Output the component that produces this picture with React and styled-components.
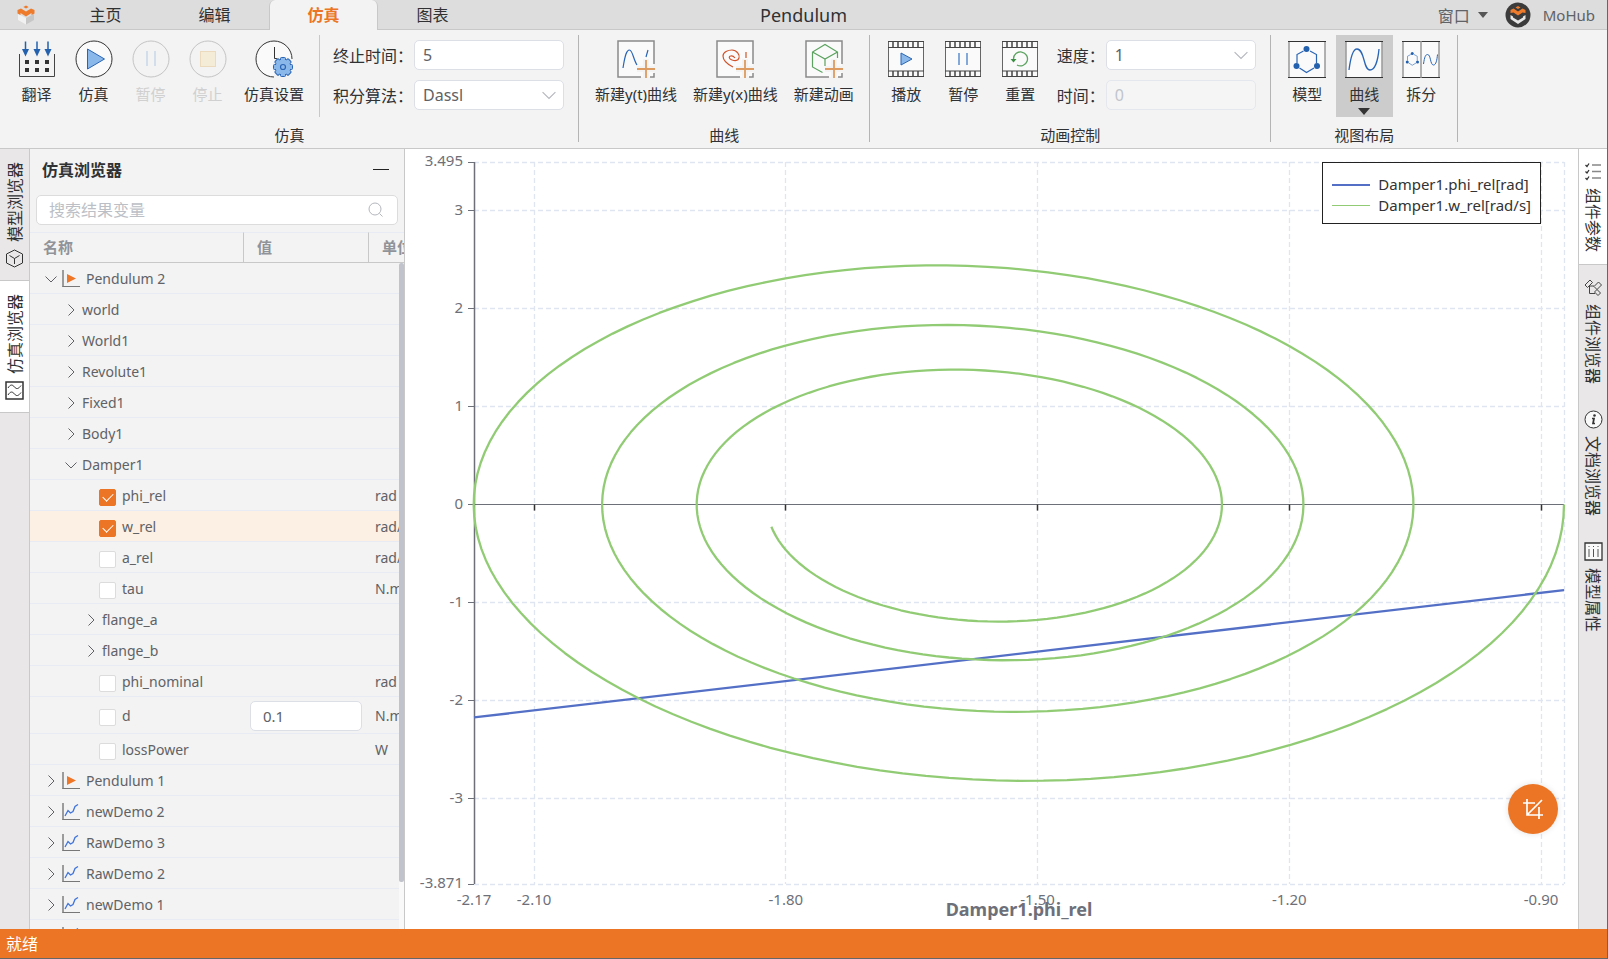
import React, { useState, useRef, useLayoutEffect } from 'react';
import styled, { createGlobalStyle, css } from 'styled-components';

const GlobalStyle = createGlobalStyle`
  * {
    box-sizing: border-box;
  }
  body {
    margin: 0;
    font-family: "Noto Sans", "Noto Sans CJK SC", sans-serif;
    font-size: 15px;
    color: #303133;
  }
  button, input, select {
    font-family: inherit;
    font-size: inherit;
    color: inherit;
  }
  button {
    padding: 0;
    border: none;
    background: none;
    cursor: pointer;
  }
`;

/* ---------- icons ---------- */

const Chevron = ({ down, size = 12, color = '#606266' }) => (
  <svg width={size} height={size} viewBox="0 0 12 12" fill="none" stroke={color}>
    <path d={down ? 'M0.5 3.5L6 9L11.5 3.5' : 'M3.5 0.5L9 6L3.5 11.5'} />
  </svg>
);

const Logo = () => (
  <svg width="20" height="20" viewBox="0 0 20 20">
    <path d="M2 9L10 13V19.500L2 15Z" fill="#f1f1f1" />
    <path d="M18 9L10 13V19.500L18 15Z" fill="#c6c6c6" />
    <path d="M1.500 5L5 3.500L10 6.500L15 3.500L18.500 5V8.500L15.500 10V8L10 11.500L4.500 8V10L1.500 8.500Z" fill="#ee7b2c" />
    <path d="M10 0.500L12.600 2L10 3.600L7.400 2Z" fill="#ee7b2c" />
  </svg>
);

const AvatarLogo = () => (
  <svg width="26" height="26" viewBox="0 0 26 26">
    <circle cx="13" cy="13" r="12.5" fill="#3b3b3b" />
    <path d="M13 4L15.500 5.500L13 7L10.500 5.500Z" fill="#ee7b2c" />
    <path d="M5.500 8L8.500 6.500L13 9.500L17.500 6.500L20.500 8V11L17.500 10.500L13 13.500L8.500 10.500L5.500 11Z" fill="#ee7b2c" />
    <path d="M5.500 13L8 14.500V15.500L13 18.500L18 15.500V14.500L20.500 13V17L13 22L5.500 17Z" fill="#e6e6e6" />
  </svg>
);

const Svg38 = ({ children }) => (
  <svg width="38" height="38" viewBox="0 0 38 38" fill="none">
    {children}
  </svg>
);

const TranslateIcon = () => (
  <Svg38>
    <path d="M1.500 14V36.500H36.500V14" stroke="#444" />
    {[7.5, 19, 30].map(x => (
      <g key={x}>
        <path d={`M${x} 1.500V10`} stroke="#2360ae" strokeWidth="1.500" />
        <path d={`M${x - 3.5} 9H${x + 3.5}L${x} 16.500Z`} fill="#2360ae" />
      </g>
    ))}
    {[9, 19, 29].map(x =>
      [22, 30].map(y => (
        <rect key={`${x}-${y}`} x={x - 2} y={y - 2} width="4" height="4" fill="#333" />
      )),
    )}
  </Svg38>
);

const SimulateIcon = () => (
  <Svg38>
    <circle cx="19" cy="19" r="18" fill="#fafafa" stroke="#333" />
    <path d="M12.500 9V29L29.500 19Z" fill="#8bb8ea" stroke="#2a65b5" />
  </Svg38>
);

const PauseIcon = () => (
  <Svg38>
    <circle cx="19" cy="19" r="18" stroke="#c4c4c4" />
    <path d="M15 11V26M23 11V26" stroke="#b3c9e6" />
  </Svg38>
);

const StopIcon = () => (
  <Svg38>
    <circle cx="19" cy="19" r="18" stroke="#c4c4c4" />
    <rect x="11.500" y="11.500" width="15" height="15" fill="#f5ecd7" stroke="#ecdabf" />
  </Svg38>
);

const SettingIcon = () => (
  <Svg38>
    <path d="M37 19A18 18 0 1 0 19 37V19H37" fill="#fafafa" />
    <path d="M37 19A18 18 0 1 0 19 37" stroke="#333" />
    <path d="M19.500 7V18.500H29" stroke="#333" />
    <circle cx="28" cy="27" r="10.500" fill="#f3f3f3" />
    {[0, 45, 90, 135].map(a => (
      <rect key={a} x="25.500" y="17.500" width="5" height="19" rx="1" fill="#8bb8ea" stroke="#2a65b5" transform={`rotate(${a} 28 27)`} />
    ))}
    <circle cx="28" cy="27" r="7.500" fill="#8bb8ea" />
    <circle cx="28" cy="27" r="2.500" stroke="#2a65b5" strokeWidth="1.200" />
  </Svg38>
);

const NewFrame = ({ children }) => (
  <Svg38>
    <path d="M1 1H37V37H1Z" fill="#fafafa" />
    <path d="M37 24V1H1V37H24M33 37H37V33" stroke="#8a8a8a" strokeWidth="1.500" />
    {children}
    <path d="M29 19V38M20 29H38" stroke="#f3f3f3" strokeWidth="6" />
    <path d="M29 20V38M20 29H38" stroke="#dd9b61" strokeWidth="1.800" />
  </Svg38>
);

const NewYtIcon = () => (
  <NewFrame>
    <path d="M6 28C8 15 9.500 10 12.500 10C15.500 10 16.500 20 20 25M29 17L31 10" stroke="#2a65b5" strokeWidth="1.200" />
  </NewFrame>
);

const NewYxIcon = () => (
  <NewFrame>
    <path d="M17 27C11 24 7 20 7 16C7 12 12 10 16 10C21 10 24 15 23 18C22 21 19 21 16 20C13 19 12.500 16.500 14.500 16C16 15.500 17.500 16 19 18M30 12V18" stroke="#d0532a" strokeWidth="1.200" />
  </NewFrame>
);

const NewAnimIcon = () => (
  <NewFrame>
    <path d="M32.500 18V12L20 4.500L7.500 12V27L17.500 32.500M7.500 12L20 19L32.500 12M20 19V26" stroke="#5ba35f" strokeWidth="1.200" />
  </NewFrame>
);

const FilmFrame = ({ children }) => (
  <Svg38>
    <path d="M1.500 1.500H36.500V36.500H1.500Z" fill="#fafafa" stroke="#666" />
    <path d="M1 1.500H37M1 7.500H37M1 31H37M1 36.500H37" stroke="#444" />
    <path d="M6 2V7M11 2V7M16 2V7M21 2V7M26 2V7M31 2V7M6 31V36M11 31V36M16 31V36M21 31V36M26 31V36M31 31V36" stroke="#444" strokeWidth="1.500" />
    {children}
  </Svg38>
);

const PlayFilmIcon = () => (
  <FilmFrame>
    <path d="M14 13V25L25 19Z" fill="#8bb8ea" stroke="#2a65b5" />
  </FilmFrame>
);

const PauseFilmIcon = () => (
  <FilmFrame>
    <path d="M15 13V25M23 13V25" stroke="#5b8fd0" strokeWidth="1.500" />
  </FilmFrame>
);

const ResetFilmIcon = () => (
  <FilmFrame>
    <path d="M12.500 19A7 7 0 1 1 16 25" stroke="#5ba35f" strokeWidth="1.300" />
    <path d="M9.500 19H15.500L12.500 22.500Z" fill="#3e8f45" />
  </FilmFrame>
);

const ViewFrame = ({ children }) => (
  <Svg38>
    <path d="M1 1H37V37H1Z" fill="#fafafa" />
    <path d="M1 1V38M37 1V38" stroke="#999" strokeWidth="1.500" />
    <path d="M0 1.500H38M0 37.500H38" stroke="#333" />
    {children}
  </Svg38>
);

const ModelShape = () => (
  <>
    <path d="M15.500 11L9 14.500V23M22 11L28.500 14.500V23M11.500 28L18.500 32.500L26 28" stroke="#2a65b5" strokeWidth="1.200" />
    <circle cx="18.500" cy="9" r="3" fill="#2360ae" />
    <circle cx="8.500" cy="26" r="3" fill="#2360ae" />
    <circle cx="29" cy="26" r="3" fill="#2360ae" />
  </>
);

const ModelIcon = () => (
  <ViewFrame>
    <ModelShape />
  </ViewFrame>
);

const CurveIcon = () => (
  <ViewFrame>
    <path d="M4 30C6 14 9 9 12 9C20 9 18 30 25 30C30 30 33 20 34 9" stroke="#2a65b5" strokeWidth="1.300" />
  </ViewFrame>
);

const SplitIcon = () => (
  <ViewFrame>
    <path d="M19 1V38" stroke="#999" strokeWidth="1.500" />
    <g transform="translate(1 9) scale(0.5)" strokeWidth="2">
      <ModelShape />
    </g>
    <path d="M21.500 24C22.500 17 23.500 14.500 25.500 14.500C29 14.500 28 25 31.500 25C34 25 35 20 35.500 14.500" stroke="#2a65b5" />
  </ViewFrame>
);

const CubeIcon = () => (
  <svg width="19" height="19" viewBox="0 0 19 19" fill="none" stroke="#333">
    <path d="M9.500 1L17.500 5V14L9.500 18L1.500 14V5Z" />
    <path d="M9.500 15V9.500L4.500 6.500M9.500 9.500L14.500 6.500" />
  </svg>
);

const WaveIcon = () => (
  <svg width="19" height="19" viewBox="0 0 19 19" fill="none" stroke="#333">
    <path d="M1 1H18V18H1Z" strokeWidth="1.500" />
    <path d="M3 7C5.500 3 7.500 3.500 9.500 6C11.500 8.500 13.500 8 16 4.500M3 14C5.500 10 7.500 10.500 9.500 13C11.500 15.500 13.500 15 16 11.500" />
  </svg>
);

const ChecklistIcon = () => (
  <svg width="19" height="19" viewBox="0 0 19 19" fill="none">
    <path d="M8 3H17M8 9.500H17M8 16H17" stroke="#888" strokeWidth="1.500" />
    <path d="M1.500 3L3 4.500L5 1.500M1.500 9.500L3 11L5 8M1.500 16L3 17.500L5 14.500" stroke="#333" strokeWidth="1.300" />
  </svg>
);

const ComponentsIcon = () => (
  <svg width="19" height="19" viewBox="0 0 19 19" fill="none" stroke="#444">
    <path d="M1 7L6 2L8.500 4.500L3.500 9.500Z" />
    <path d="M10 8.500L14.500 4L17.500 7L13 11.500Z" />
    <path d="M10.500 14L13 11.500L16.500 15L14 17.500Z" />
    <path d="M5.500 8V15.500H11M6 8H10" />
  </svg>
);

const InfoIcon = () => (
  <svg width="19" height="19" viewBox="0 0 19 19" fill="none" stroke="#333">
    <circle cx="9.500" cy="9.500" r="8.500" fill="#fafafa" />
    <circle cx="10.500" cy="5.500" r="1.300" fill="#333" stroke="none" />
    <path d="M8 8.500H10L9 13.500H11" strokeWidth="1.700" />
  </svg>
);

const PropsIcon = () => (
  <svg width="19" height="19" viewBox="0 0 19 19" fill="none" stroke="#333">
    <path d="M1 1H18V18H1Z" fill="#fafafa" strokeWidth="1.300" />
    <path d="M5 4V5M5 7V15M9.500 4V5M9.500 7V15M14 4V5M14 7V15" stroke="#555" />
  </svg>
);

const ResultIcon = ({ kind }) => (
  <svg width="18" height="18" viewBox="0 0 18 18" fill="none">
    <path d="M1 0V17" stroke="#444" />
    <path d="M0.500 16.500H18" stroke="#777" />
    {kind === 'play' ? (
      <path d="M5 4L14 8.500L5 13Z" fill="#ee7727" />
    ) : (
      <path d="M3 13L6 7.500L8.500 10L11 8.500L13 3.500L16 1.500" stroke="#3f73dc" strokeWidth="1.300" />
    )}
  </svg>
);

const SearchIcon = () => (
  <svg width="16" height="16" viewBox="0 0 16 16" fill="none" stroke="#b4b7bd">
    <circle cx="7" cy="7" r="6" />
    <path d="M11.500 11.500L14.500 14.500" />
  </svg>
);

const CropIcon = () => (
  <svg width="22" height="22" viewBox="0 0 22 22" fill="none" stroke="#fff" strokeWidth="1.700">
    <path d="M5 1V17H21M1 5H13M17 9V21M5 17L20 2" />
  </svg>
);

/* ---------- chart ---------- */

const X_MIN = -2.1716;
const X_MAX = -0.8727;
const Y_MIN = -3.871;
const Y_MAX = 3.495;

// damped pendulum, integrated with RK4 over 5 seconds
const simulate = () => {
  const k = 19.54;
  const c = 0.4;
  const h = 0.01;
  const acc = (p, w) => -k * Math.cos(p) - c * w;
  const points = [];
  let p = X_MAX;
  let w = 0;
  for (let i = 0; i <= 500; i += 1) {
    points.push([p, w]);
    const a1 = acc(p, w);
    const w2 = w + (h / 2) * a1;
    const a2 = acc(p + (h / 2) * w, w2);
    const w3 = w + (h / 2) * a2;
    const a3 = acc(p + (h / 2) * w2, w3);
    const w4 = w + h * a3;
    const a4 = acc(p + h * w3, w4);
    p += (h / 6) * (w + 2 * w2 + 2 * w3 + w4);
    w += (h / 6) * (a1 + 2 * a2 + 2 * a3 + a4);
  }
  return points;
};

const trajectory = simulate();
const xTicks = [-2.1, -1.8, -1.5, -1.2, -0.9];
const yTicks = [3, 2, 1, 0, -1, -2, -3];

const Chart = () => {
  const ref = useRef(null);
  const [size, setSize] = useState({ width: 0, height: 0 });

  useLayoutEffect(() => {
    const update = () => {
      const { width, height } = ref.current.getBoundingClientRect();
      setSize({ width, height });
    };
    update();
    const observer = new ResizeObserver(update);
    observer.observe(ref.current);
    return () => observer.disconnect();
  }, []);

  const left = 69;
  const top = 13;
  const right = Math.max(size.width - 14, left);
  const bottom = Math.max(size.height - 45, top);
  const sx = v => left + ((v - X_MIN) / (X_MAX - X_MIN)) * (right - left);
  const sy = v => top + ((Y_MAX - v) / (Y_MAX - Y_MIN)) * (bottom - top);
  const crisp = v => Math.floor(v) + 0.5;
  const toPath = pts => pts.map(([x, y]) => `${sx(x).toFixed(2)},${sy(y).toFixed(2)}`).join(' ');

  return (
    <ChartArea ref={ref}>
      <ChartSvg width={size.width} height={size.height}>
        <g stroke="#e0e6f1" strokeWidth="1.300" strokeDasharray="5 3">
          {[Y_MAX, 3, 2, 1, -1, -2, -3, Y_MIN].map(v => (
            <line key={v} x1={left} x2={right} y1={crisp(sy(v))} y2={crisp(sy(v))} />
          ))}
          {[...xTicks, X_MAX].map(v => (
            <line key={v} x1={crisp(sx(v))} x2={crisp(sx(v))} y1={top} y2={bottom} />
          ))}
        </g>
        <g stroke="#6e7079">
          <line x1={crisp(left)} x2={crisp(left)} y1={top} y2={bottom} strokeWidth="1.500" />
          <line x1={left} x2={right} y1={crisp(sy(0))} y2={crisp(sy(0))} />
          {[Y_MAX, ...yTicks, Y_MIN].map(v => (
            <line key={v} x1={left - 6} x2={left} y1={crisp(sy(v))} y2={crisp(sy(v))} />
          ))}
          {xTicks.map(v => (
            <line key={v} x1={crisp(sx(v))} x2={crisp(sx(v))} y1={sy(0)} y2={sy(0) + 6} stroke="#333" strokeWidth="1.500" />
          ))}
        </g>
        <polyline points={toPath([[X_MIN, X_MIN], [X_MAX, X_MAX]])} stroke="#5470c6" />
        <polyline points={toPath(trajectory)} stroke="#91cc75" />
        <g textAnchor="end">
          <text x={left - 11} y={sy(Y_MAX) + 4}>3.495</text>
          {yTicks.map(v => (
            <text key={v} x={left - 11} y={sy(v) + 4}>{v}</text>
          ))}
          <text x={left - 11} y={sy(Y_MIN) + 4}>-3.871</text>
        </g>
        <g textAnchor="middle">
          <text x={left} y={bottom + 21}>-2.17</text>
          {xTicks.map(v => (
            <text key={v} x={sx(v)} y={bottom + 21}>{v.toFixed(2)}</text>
          ))}
          <AxisName x={(left + right) / 2} y={bottom + 32}>Damper1.phi_rel</AxisName>
        </g>
      </ChartSvg>
      <Legend>
        <LegendItem>
          <LegendLine $color="#5470c6" $thick />
          Damper1.phi_rel[rad]
        </LegendItem>
        <LegendItem>
          <LegendLine $color="#91cc75" />
          Damper1.w_rel[rad/s]
        </LegendItem>
      </Legend>
      <CropButton aria-label="crop">
        <CropIcon />
      </CropButton>
    </ChartArea>
  );
};

/* ---------- data ---------- */

const tabs = ['主页', '编辑', '仿真', '图表'];

const rows = [
  { name: 'Pendulum 2', level: 0, icon: 'play', open: true },
  { name: 'world', level: 1 },
  { name: 'World1', level: 1 },
  { name: 'Revolute1', level: 1 },
  { name: 'Fixed1', level: 1 },
  { name: 'Body1', level: 1 },
  { name: 'Damper1', level: 1, open: true },
  { name: 'phi_rel', leaf: true, unit: 'rad' },
  { name: 'w_rel', leaf: true, unit: 'rad/s', active: true },
  { name: 'a_rel', leaf: true, unit: 'rad/s2' },
  { name: 'tau', leaf: true, unit: 'N.m' },
  { name: 'flange_a', level: 2 },
  { name: 'flange_b', level: 2 },
  { name: 'phi_nominal', leaf: true, unit: 'rad' },
  { name: 'd', leaf: true, unit: 'N.m.s/rad', value: '0.1' },
  { name: 'lossPower', leaf: true, unit: 'W' },
  { name: 'Pendulum 1', level: 0, icon: 'play' },
  { name: 'newDemo 2', level: 0, icon: 'curve' },
  { name: 'RawDemo 3', level: 0, icon: 'curve' },
  { name: 'RawDemo 2', level: 0, icon: 'curve' },
  { name: 'newDemo 1', level: 0, icon: 'curve' },
  { name: 'RawDemo 1', level: 0, icon: 'curve' },
];

const rightTabs = [
  { label: '组件参数', Icon: ChecklistIcon, active: true },
  { label: '组件浏览器', Icon: ComponentsIcon },
  { label: '文档浏览器', Icon: InfoIcon },
  { label: '模型属性', Icon: PropsIcon },
];

/* ---------- page ---------- */

const Tool = ({ Icon, label, ...rest }) => (
  <ToolButton {...rest}>
    <Icon />
    <span>{label}</span>
    {rest.$active && <CaretDown $big />}
  </ToolButton>
);

const App = () => {
  const [tab, setTab] = useState('仿真');
  const [checked, setChecked] = useState(['phi_rel', 'w_rel']);

  const toggle = name => {
    setChecked(prev =>
      prev.includes(name) ? prev.filter(n => n !== name) : [...prev, name],
    );
  };

  return (
    <Page>
      <GlobalStyle />
      <TitleBar>
        <TabList>
          <LogoBox>
            <Logo />
          </LogoBox>
          {tabs.map(name => (
            <TabButton key={name} $active={name === tab} onClick={() => setTab(name)}>
              {name}
            </TabButton>
          ))}
        </TabList>
        <Title>Pendulum</Title>
        <UserArea>
          <WindowButton>
            窗口
            <CaretDown />
          </WindowButton>
          <AvatarLogo />
          <UserName>MoHub</UserName>
        </UserArea>
      </TitleBar>

      <Ribbon>
        <Group>
          <GroupBody>
            <Tool Icon={TranslateIcon} label="翻译" />
            <Tool Icon={SimulateIcon} label="仿真" />
            <Tool Icon={PauseIcon} label="暂停" disabled />
            <Tool Icon={StopIcon} label="停止" disabled />
            <Tool Icon={SettingIcon} label="仿真设置" />
            <Divider />
            <Fields>
              <label htmlFor="stop-time">终止时间：</label>
              <FieldInput id="stop-time" defaultValue="5" />
              <label htmlFor="method">积分算法：</label>
              <SelectBox>
                <FieldSelect id="method">
                  <option>Dassl</option>
                </FieldSelect>
                <Chevron down color="#b4b7bd" size={14} />
              </SelectBox>
            </Fields>
          </GroupBody>
          <GroupName>仿真</GroupName>
        </Group>
        <Group>
          <GroupBody>
            <Tool Icon={NewYtIcon} label="新建y(t)曲线" />
            <Tool Icon={NewYxIcon} label="新建y(x)曲线" />
            <Tool Icon={NewAnimIcon} label="新建动画" />
          </GroupBody>
          <GroupName>曲线</GroupName>
        </Group>
        <Group>
          <GroupBody>
            <Tool Icon={PlayFilmIcon} label="播放" />
            <Tool Icon={PauseFilmIcon} label="暂停" />
            <Tool Icon={ResetFilmIcon} label="重置" />
            <Fields>
              <label htmlFor="speed">速度：</label>
              <SelectBox>
                <FieldSelect id="speed">
                  <option>1</option>
                </FieldSelect>
                <Chevron down color="#b4b7bd" size={14} />
              </SelectBox>
              <label htmlFor="time">时间：</label>
              <FieldInput id="time" defaultValue="0" disabled />
            </Fields>
          </GroupBody>
          <GroupName>动画控制</GroupName>
        </Group>
        <Group>
          <GroupBody>
            <Tool Icon={ModelIcon} label="模型" />
            <Tool Icon={CurveIcon} label="曲线" $active />
            <Tool Icon={SplitIcon} label="拆分" />
          </GroupBody>
          <GroupName>视图布局</GroupName>
        </Group>
      </Ribbon>

      <Main>
        <Rail $side="left">
          <RailTab>
            <RailText $flip>模型浏览器</RailText>
            <CubeIcon />
          </RailTab>
          <RailTab $active>
            <RailText $flip>仿真浏览器</RailText>
            <WaveIcon />
          </RailTab>
        </Rail>

        <Panel>
          <PanelHeader>
            <PanelTitle>仿真浏览器</PanelTitle>
            <MinimizeButton aria-label="minimize" />
          </PanelHeader>
          <SearchBox>
            <input aria-label="搜索结果变量" placeholder="搜索结果变量" />
            <SearchIcon />
          </SearchBox>
          <TreeArea>
            <Tree>
              <colgroup>
                <col width="214" />
                <col width="125" />
                <col width="80" />
              </colgroup>
              <thead>
                <tr>
                  <HeadCell>名称</HeadCell>
                  <HeadCell>值</HeadCell>
                  <HeadCell>单位</HeadCell>
                </tr>
              </thead>
              <tbody>
                {rows.map(row => (
                  <Row key={row.name} $active={row.active} $tall={row.value}>
                    <td>
                      {row.leaf ? (
                        <Leaf>
                          <Checkbox
                            type="checkbox"
                            checked={checked.includes(row.name)}
                            onChange={() => toggle(row.name)}
                          />
                          {row.name}
                        </Leaf>
                      ) : (
                        <Node $level={row.level}>
                          <Chevron down={row.open} />
                          {row.icon && <ResultIcon kind={row.icon} />}
                          {row.name}
                        </Node>
                      )}
                    </td>
                    <td>
                      {row.value && <ValueInput aria-label={row.name} defaultValue={row.value} />}
                    </td>
                    <UnitCell>{row.unit}</UnitCell>
                  </Row>
                ))}
              </tbody>
            </Tree>
            <ScrollTrack>
              <ScrollThumb />
            </ScrollTrack>
          </TreeArea>
        </Panel>

        <Chart />

        <Rail $side="right">
          {rightTabs.map(({ label, Icon, active }) => (
            <RailTab key={label} $active={active}>
              <Icon />
              <RailText>{label}</RailText>
            </RailTab>
          ))}
        </Rail>
      </Main>

      <StatusBar>就绪</StatusBar>
    </Page>
  );
};

const Page = styled.div`
  display: flex;
  flex-direction: column;
  height: 100vh;
  border-right: 1px solid #666;
  border-bottom: 1px solid #666;
  background-color: #f3f3f3;
  overflow: hidden;
`;

const TitleBar = styled.header`
  display: grid;
  grid-template-columns: 1fr auto 1fr;
  align-items: center;
  height: 30px;
  background-color: #ddd;
  box-shadow: inset 0 -1px #c8c8c8;
`;

const TabList = styled.nav`
  display: flex;
  height: 30px;
`;

const LogoBox = styled.div`
  display: flex;
  align-items: center;
  justify-content: center;
  width: 51px;
`;

const TabButton = styled.button`
  width: 109px;
  padding-bottom: 3px;
  border-radius: 6px 6px 0 0;
  font-size: 16px;
  ${({ $active }) =>
    $active &&
    css`
      border-left: 1px solid #c8c8c8;
      border-right: 1px solid #c8c8c8;
      background-color: #f3f3f3;
      color: #eb7524;
      font-weight: 700;
    `}
`;

const Title = styled.h1`
  margin: 0;
  font-size: 18px;
  font-weight: 400;
  line-height: 28px;
`;

const UserArea = styled.div`
  display: flex;
  align-items: center;
  justify-content: flex-end;
  padding-right: 12px;
  color: #606266;
  font-size: 16px;
`;

const WindowButton = styled.button`
  display: flex;
  align-items: center;
  gap: 8px;
  margin-right: 17px;
`;

const UserName = styled.span`
  margin-left: 12px;
  font-size: 15px;
`;

const CaretDown = styled.span`
  border: 5px solid transparent;
  border-top: 6px solid #555;
  border-bottom: none;
  ${({ $big }) =>
    $big &&
    css`
      margin-top: 3px;
      border-width: 7px 6px 0;
      border-top-color: #333;
    `}
`;

const Ribbon = styled.section`
  display: flex;
  flex: none;
  padding: 5px 0 6px;
  border-bottom: 1px solid #c8c8c8;
`;

const Group = styled.div`
  display: flex;
  flex-direction: column;
  padding: 0 7px 0 8px;
  border-right: 1px solid #b4b4b4;
`;

const GroupBody = styled.div`
  display: flex;
  height: 82px;
`;

const GroupName = styled.div`
  padding-top: 11px;
  text-align: center;
  line-height: 14px;
`;

const ToolButton = styled.button`
  display: flex;
  flex-direction: column;
  align-items: center;
  min-width: 57px;
  padding: 5px 8px 0;
  line-height: 22px;
  background-color: ${({ $active }) => ($active ? '#ccc' : 'transparent')};
  span:first-of-type {
    margin-top: 5px;
  }
  &:disabled {
    color: #d0d0d0;
  }
`;

const Divider = styled.div`
  width: 1px;
  margin: 0 13px 0 7px;
  background-color: #c8c8c8;
`;

const Fields = styled.div`
  display: grid;
  grid-template-columns: auto 150px;
  grid-auto-rows: 30px;
  align-items: center;
  gap: 10px 1px;
  padding: 5px 7px 0 8px;
  font-size: 16px;
  ${Divider} + & {
    padding-left: 0;
  }
`;

const fieldStyle = css`
  width: 100%;
  height: 30px;
  padding: 0 8px;
  border: 1px solid #dcdfe6;
  border-radius: 5px;
  background-color: #fff;
  color: #606266;
  font-size: 16px;
  outline: none;
`;

const FieldInput = styled.input`
  ${fieldStyle}
  &:disabled {
    border-color: #e4e7ed;
    background-color: #f5f5f6;
    color: #c0c4cc;
  }
`;

const SelectBox = styled.div`
  position: relative;
  svg {
    position: absolute;
    top: 8px;
    right: 8px;
    pointer-events: none;
  }
`;

const FieldSelect = styled.select`
  ${fieldStyle}
  appearance: none;
`;

const Main = styled.main`
  display: flex;
  flex: 1;
  min-height: 0;
`;

const Rail = styled.aside`
  flex: none;
  width: ${({ $side }) => ($side === 'left' ? '30px' : '29px')};
  background-color: #e9e7e8;
  ${({ $side }) =>
    $side === 'left'
      ? css`
          border-right: 1px solid #c8cad0;
        `
      : css`
          border-left: 1px solid #c8c8c8;
        `}
`;

const RailTab = styled.button`
  display: flex;
  flex-direction: column;
  align-items: center;
  gap: 7px;
  width: 100%;
  padding: 13px 0 12px;
  border-bottom: 1px solid transparent;
  font-size: 16px;
  ${({ $active }) =>
    $active &&
    css`
      border-bottom-color: #c8c8c8;
      background-color: #fff;
      box-shadow: 0 -1px #c8c8c8;
    `}
`;

const RailText = styled.span`
  writing-mode: vertical-rl;
  text-orientation: sideways;
  line-height: 22px;
  transform: ${({ $flip }) => ($flip ? 'rotate(180deg)' : 'none')};
`;

const Panel = styled.section`
  display: flex;
  flex-direction: column;
  flex: none;
  width: 375px;
  border-right: 1px solid #c8c8c8;
`;

const PanelHeader = styled.div`
  display: flex;
  align-items: center;
  justify-content: space-between;
  height: 46px;
  padding: 0 15px 6px 12px;
`;

const PanelTitle = styled.h2`
  margin: 0;
  font-size: 16px;
  font-weight: 700;
`;

const MinimizeButton = styled.button`
  width: 16px;
  height: 16px;
  background: linear-gradient(#222, #222) center / 16px 1px no-repeat;
`;

const SearchBox = styled.div`
  display: flex;
  align-items: center;
  height: 30px;
  margin: 0 6px 7px;
  padding: 0 13px 0 12px;
  border: 1px solid #dcdcdc;
  border-radius: 5px;
  background-color: #fff;
  input {
    flex: 1;
    min-width: 0;
    padding: 0;
    border: none;
    outline: none;
    font-size: 16px;
  }
  input::placeholder {
    color: #bcbfc6;
  }
`;

const TreeArea = styled.div`
  position: relative;
  flex: 1;
  min-height: 0;
  overflow: hidden;
`;

const Tree = styled.table`
  width: 419px;
  table-layout: fixed;
  border-spacing: 0;
  color: #606266;
  font-size: 14px;
  td {
    padding: 1px 6px 0;
    border-bottom: 1px solid #e8ebf3;
  }
`;

const HeadCell = styled.th`
  height: 31px;
  padding: 0 13px 2px;
  border-top: 1px solid #e8ebf3;
  border-right: 1px solid #c8c8c8;
  border-bottom: 1px solid #c8c8c8;
  color: #909399;
  font-size: 15px;
  font-weight: 700;
  text-align: left;
`;

const Row = styled.tr`
  height: ${({ $tall }) => ($tall ? '37px' : '31px')};
  background-color: ${({ $active }) => ($active ? '#fcf0e4' : 'transparent')};
`;

const Node = styled.div`
  display: flex;
  align-items: center;
  gap: 5px;
  padding-left: ${({ $level }) => 9 + $level * 20}px;
  line-height: 20px;
  svg + svg {
    margin-right: 1px;
  }
`;

const Leaf = styled.label`
  display: flex;
  align-items: center;
  gap: 6px;
  padding-left: 63px;
  line-height: 20px;
`;

const Checkbox = styled.input`
  appearance: none;
  width: 17px;
  height: 17px;
  margin: 3px 0 0;
  border: 1px solid #dcdcdc;
  border-radius: 2px;
  background-color: #fff;
  &:checked {
    border-color: #eb7524;
    background-color: #eb7524;
  }
  &:checked::after {
    content: '';
    display: block;
    width: 5px;
    height: 9px;
    margin: 1px 5px;
    border: solid #fff;
    border-width: 0 1px 1px 0;
    transform: rotate(45deg);
  }
`;

const ValueInput = styled.input`
  display: block;
  width: 112px;
  height: 30px;
  padding: 0 12px;
  border: 1px solid #dcdfe6;
  border-radius: 5px;
  background-color: #fff;
  font-size: 15px;
`;

const UnitCell = styled.td`
  white-space: nowrap;
`;

const ScrollTrack = styled.div`
  position: absolute;
  top: 31px;
  right: 0;
  bottom: 0;
  width: 5px;
  background-color: #f9f9f9;
`;

const ScrollThumb = styled.div`
  height: 93%;
  border-radius: 2px;
  background-color: #c0c3cb;
`;

const ChartArea = styled.section`
  position: relative;
  flex: 1;
  min-width: 0;
  overflow: hidden;
  background-color: #fff;
`;

const ChartSvg = styled.svg`
  display: block;
  text {
    fill: #6e7079;
    font-size: 15px;
  }
  polyline {
    fill: none;
    stroke-width: 2.3;
    stroke-linejoin: round;
  }
`;

const AxisName = styled.text`
  font-weight: 700;
  && {
    font-size: 18px;
  }
`;

const Legend = styled.div`
  position: absolute;
  top: 13px;
  right: 37px;
  padding: 11px 9px 7px;
  border: 1px solid #222;
  background-color: #fff;
`;

const LegendItem = styled.div`
  display: flex;
  align-items: center;
  gap: 8px;
  line-height: 21px;
  color: #333;
`;

const LegendLine = styled.span`
  width: 38px;
  height: ${({ $thick }) => ($thick ? '2px' : '1px')};
  background-color: ${({ $color }) => $color};
`;

const CropButton = styled.button`
  display: flex;
  align-items: center;
  justify-content: center;
  position: absolute;
  right: 20px;
  bottom: 95px;
  width: 50px;
  height: 50px;
  border-radius: 50%;
  background-color: #eb7524;
  box-shadow: 0 0 6px rgba(0, 0, 0, 0.12);
`;

const StatusBar = styled.footer`
  flex: none;
  height: 29px;
  padding: 0 6px;
  background-color: #eb7524;
  color: #fff;
  font-size: 16px;
  line-height: 30px;
`;

export default App;
